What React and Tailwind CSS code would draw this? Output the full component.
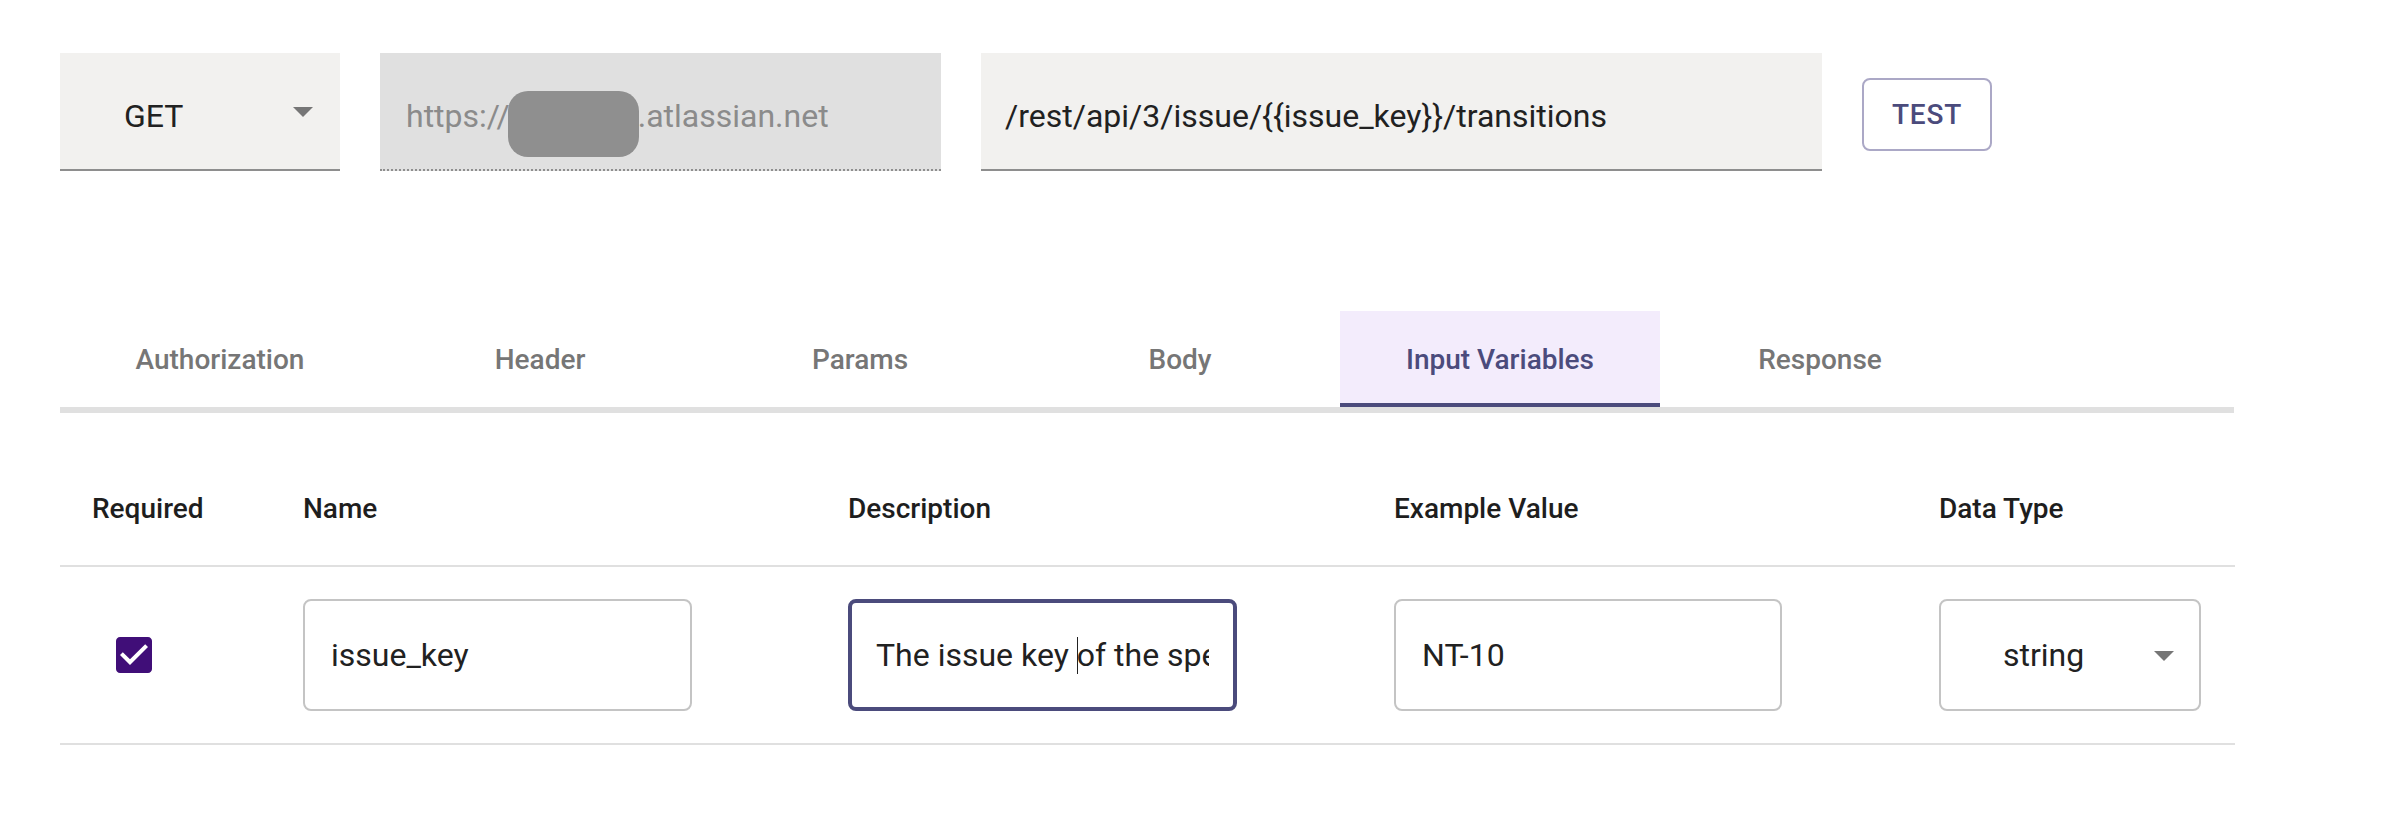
import React from "react";

function DropArrow({ className }) {
  return (
    <svg viewBox="7 10 10 5" className={className} fill="#767676">
      <path d="M7 10l5 5 5-5z" />
    </svg>
  );
}

function CheckIcon() {
  return (
    <svg viewBox="3 3 18 18" className="w-[36px] h-[36px] block">
      <path
        fill="#400e78"
        d="M19 3H5c-1.11 0-2 .9-2 2v14c0 1.1.89 2 2 2h14c1.11 0 2-.9 2-2V5c0-1.1-.89-2-2-2z"
      />
      <path fill="#ffffff" d="M10 17l-5-5 1.41-1.41L10 14.17l7.59-7.59L19 8l-9 9z" />
    </svg>
  );
}

const tabs = ["Authorization", "Header", "Params", "Body", "Input Variables", "Response"];

export default function App() {
  return (
    <div className="w-[2402px] h-[838px] bg-white pl-[60px] pt-[53px] font-['Roboto','Liberation_Sans',sans-serif] text-[#212121] overflow-hidden">
      {/* Top request row */}
      <div className="flex items-start">
        <div className="w-[280px] h-[118px] bg-[#f2f1ef] border-b-2 border-[#8e8e8e] flex items-start pl-[64px] pr-[27px] pt-[44px]">
          <span className="text-[32px] leading-[38px] flex-1">GET</span>
          <DropArrow className="w-[20px] h-[10px] mt-[10px]" />
        </div>
        <div className="relative ml-[40px] w-[561px] h-[118px] bg-[#e0e0e0] border-b-2 border-dotted border-[#8e8e8e] pl-[26px] pt-[44px]">
          <span className="text-[32px] leading-[38px] text-[#8b8b8b] whitespace-nowrap">
            https://<span className="inline-block w-[128px]"></span>.atlassian.net
          </span>
          <div className="absolute left-[128px] top-[38px] w-[131px] h-[66px] rounded-[20px] bg-[#8f8f8f]"></div>
        </div>
        <div className="ml-[40px] w-[841px] h-[118px] bg-[#f2f1ef] border-b-2 border-[#8e8e8e] pl-[24px] pt-[44px]">
          <span className="text-[32px] leading-[38px] whitespace-nowrap">/rest/api/3/issue/{"{{"}issue_key{"}}"}/transitions</span>
        </div>
        <button className="ml-[40px] mt-[25px] w-[130px] h-[73px] rounded-[8px] border-2 border-[#aba8c6] text-[28px] font-medium text-[#4b4b7c] tracking-[0.8px] flex items-center justify-center">
          TEST
        </button>
      </div>

      {/* Tabs */}
      <div className="mt-[140px] w-[2174px] flex border-b-[6px] border-[#e0e0e0]">
        {tabs.map((t) =>
          t === "Input Variables" ? (
            <div
              key={t}
              className="w-[320px] h-[96px] pt-[6px] bg-[#f3ecfc] border-b-4 border-[#4b4b7c] flex items-center justify-center text-[28px] font-medium text-[#4b4b7c]"
            >
              {t}
            </div>
          ) : (
            <div
              key={t}
              className="w-[320px] h-[96px] pt-[2px] flex items-center justify-center text-[28px] font-medium text-[#767676]"
            >
              {t}
            </div>
          )
        )}
      </div>

      {/* Table */}
      <div className="mt-[40px] w-[2175px]">
        <div className="grid grid-cols-[211px_545px_546px_545px_328px] border-b-2 border-[#e0e0e0] text-[28px] font-medium leading-[48px] text-[#1e1e1e]">
          <div className="p-[32px]">Required</div>
          <div className="p-[32px]">Name</div>
          <div className="p-[32px]">Description</div>
          <div className="p-[32px]">Example Value</div>
          <div className="p-[32px]">Data Type</div>
        </div>
        <div className="grid grid-cols-[211px_545px_546px_545px_328px] border-b-2 border-[#e0e0e0] text-[32px] leading-[38px]">
          <div className="px-[32px] py-[32px] h-[176px] flex items-center">
            <div className="ml-[24px]">
              <CheckIcon />
            </div>
          </div>
          <div className="px-[32px] py-[32px]">
            <div className="w-[389px] h-[112px] rounded-[8px] border-2 border-[#c4c4c4] pl-[26px] flex items-center">
              issue_key
            </div>
          </div>
          <div className="px-[32px] py-[32px]">
            <div className="w-[389px] h-[112px] rounded-[8px] border-4 border-[#4b4b7c] px-[24px] flex items-center overflow-hidden">
              <div className="whitespace-nowrap overflow-hidden w-full">
                The issue key{" "}
                <span className="inline-block w-px h-[37px] bg-[#222] align-[-8px] -mr-px"></span>
                of the specified issue
              </div>
            </div>
          </div>
          <div className="px-[32px] py-[32px]">
            <div className="w-[388px] h-[112px] rounded-[8px] border-2 border-[#c4c4c4] pl-[26px] flex items-center">
              NT-10
            </div>
          </div>
          <div className="px-[32px] py-[32px]">
            <div className="w-[262px] h-[112px] rounded-[8px] border-2 border-[#c4c4c4] pl-[62px] pr-[25px] flex items-center">
              <span className="flex-1">string</span>
              <DropArrow className="w-[20px] h-[10px] mt-[2px]" />
            </div>
          </div>
        </div>
      </div>
    </div>
  );
}
